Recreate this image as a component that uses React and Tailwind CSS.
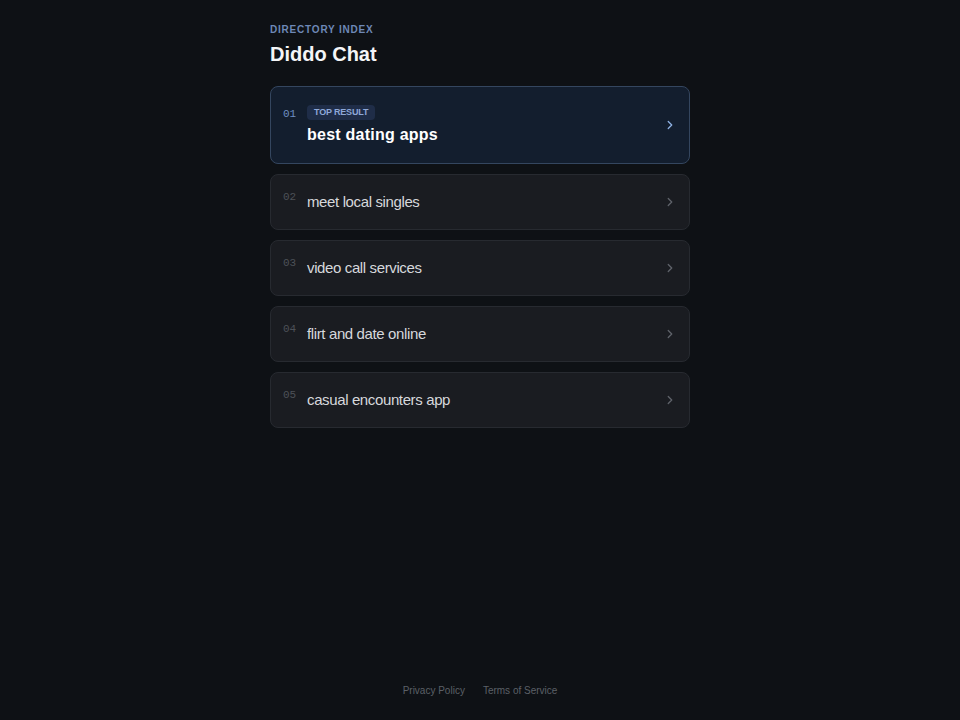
import { ChevronRight } from 'lucide-react';

const results = [
    { id: '01', title: 'best dating apps', top: true },
    { id: '02', title: 'meet local singles' },
    { id: '03', title: 'video call services' },
    { id: '04', title: 'flirt and date online' },
    { id: '05', title: 'casual encounters app' },
];

function ResultCard({ item }) {
    const shell = item.top
        ? 'bg-[#131e2e] border-[#34465f]'
        : 'bg-[#1a1c21] border-[#272a30]';

    return (
        <a
            href="#"
            className={`flex items-center rounded-lg border px-3 py-4 ${shell}`}
        >
            <div className="flex flex-1 items-start">
                <span
                    className={`w-6 shrink-0 text-[11px] leading-3 ${item.top ? 'mt-[5px] text-[#6f8fc2]' : 'text-[#4d5158]'}`}
                    style={{ fontFamily: '"Liberation Mono", "DejaVu Sans Mono", monospace' }}
                >
                    {item.id}
                </span>
                {item.top ? (
                    <div className="flex flex-col pt-[2px] pb-[1px]">
                        <span className="self-start rounded bg-[#1f2d48] px-[7px] py-[2px] text-[9px] font-bold leading-[11px] tracking-[-0.02em] text-[#8ea8d8]">
                            TOP RESULT
                        </span>
                        <span className="mt-[4px] text-base font-bold leading-[22px] tracking-[0.015em] text-white">
                            {item.title}
                        </span>
                    </div>
                ) : (
                    <span className="text-[15px] leading-[22px] tracking-tight text-[#d6d8dc]">
                        {item.title}
                    </span>
                )}
            </div>
            <ChevronRight
                size={14}
                strokeWidth={2.2}
                className={item.top ? 'text-[#8fb1e3]' : 'text-[#5f636a]'}
            />
        </a>
    );
}

export default function App() {
    return (
        <div
            className="flex min-h-screen flex-col bg-[#0e1115] text-white"
            style={{ fontFamily: '"Liberation Sans", Arial, sans-serif' }}
        >
            <main className="flex-1">
                <div className="mx-auto w-[420px] pt-[22px]">
                    <p className="text-[10px] font-bold leading-4 tracking-[0.08em] text-[#6d88b6]">
                        DIRECTORY INDEX
                    </p>
                    <h1 className="mt-[2px] text-xl font-bold leading-7 text-[#f4f5f7]">Diddo Chat</h1>

                    <div className="mt-[18px] flex flex-col gap-[10px]">
                        {results.map((item) => (
                            <ResultCard key={item.id} item={item} />
                        ))}
                    </div>
                </div>
            </main>

            <footer className="flex justify-center gap-[18px] pb-[22px] text-[10px] leading-[15px] text-[#5b6067]">
                <a href="#">Privacy Policy</a>
                <a href="#">Terms of Service</a>
            </footer>
        </div>
    );
}
